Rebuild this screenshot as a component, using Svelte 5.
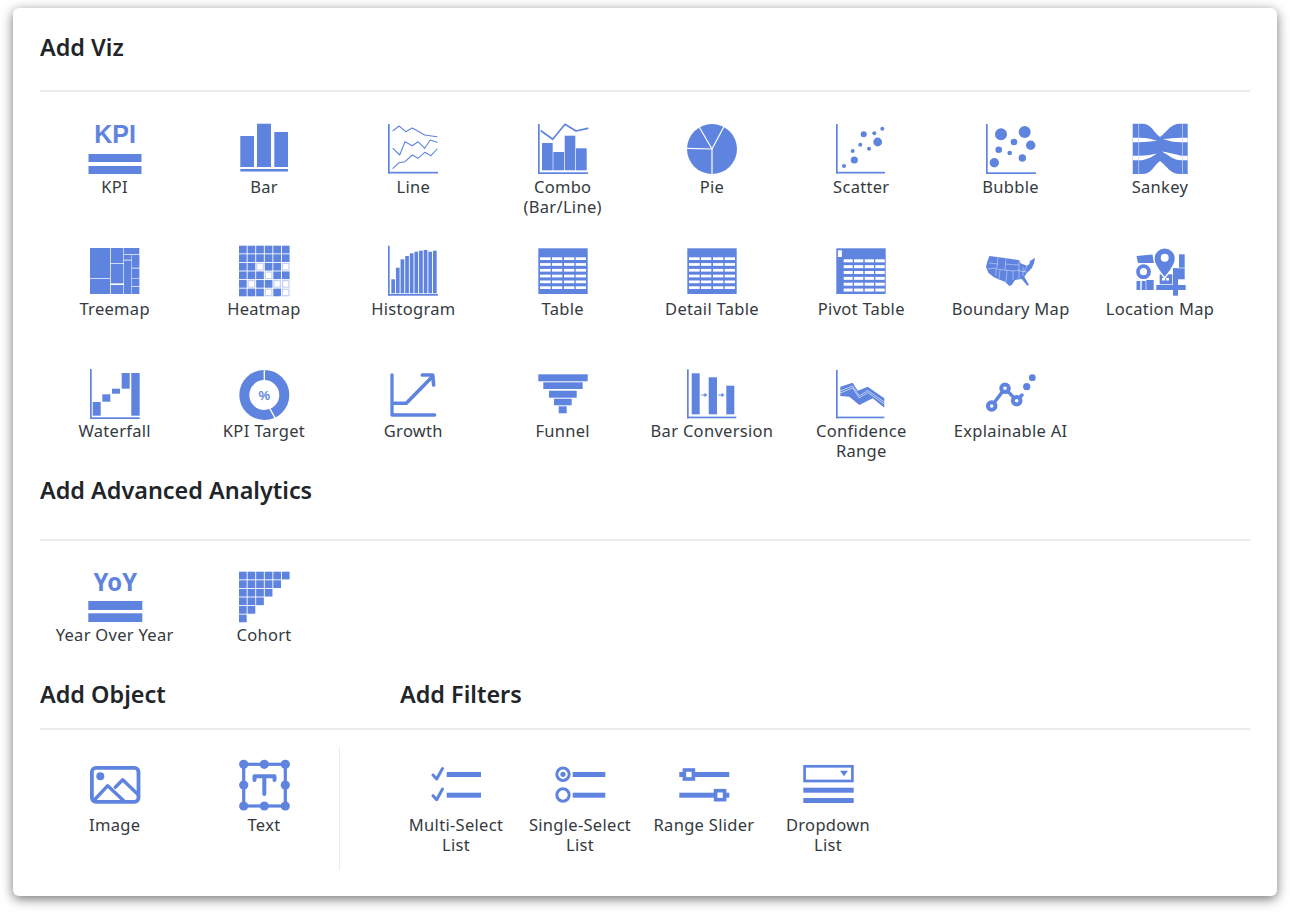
<script lang="ts">
  // helpers for the repeated icon parts (every icon is drawn on a 50x50 box)
  const r = (x, y, w, h) => `<rect x="${x}" y="${y}" width="${w}" height="${h}"/>`;
  const axis = (top, h, w) => r(0, top, 1.7, h) + r(0, top + h - 1.7, w, 1.7);
  const dots = (list) => list.map(([x, y, rad]) => `<circle cx="${x}" cy="${y}" r="${rad}"/>`).join('');
  const line = (pts, w = 1.1, color = 'currentColor') =>
    `<polyline points="${pts}" fill="none" stroke="${color}" stroke-width="${w}" stroke-linejoin="round" stroke-linecap="round"/>`;

  function table() {
    let s = r(0.3, 3.3, 49.4, 45.7);
    for (let i = 0; i < 6; i++)
      for (const [x, w] of [[2, 10.7], [14, 10.3], [26, 10.3], [37.7, 10.3]])
        s += `<rect x="${x}" y="${12.3 + 5.8 * i}" width="${w}" height="2.7" fill="#fff"/>`;
    return s;
  }

  function pivot() {
    let s = r(0.3, 3.3, 49.4, 45.7) + `<rect x="1.9" y="5.3" width="4" height="6.7" fill="#fff"/>`;
    for (let i = 0; i < 6; i++)
      for (const [x, w] of [[7.7, 9], [18, 9.3], [28.7, 9.3], [39.3, 9.4]])
        s += `<rect x="${x}" y="${14.3 + 5.85 * i}" width="${w}" height="3" fill="#fff"/>`;
    return s;
  }

  function heatmap() {
    const blank = ['2,2', '2,5', '3,3', '4,1', '4,4', '4,5', '5,3', '5,5'];
    let s = '';
    for (let row = 0; row < 6; row++)
      for (let col = 0; col < 6; col++) {
        const x = (col * 8.58).toFixed(2);
        const y = (0.7 + row * 8.58).toFixed(2);
        s += blank.includes(`${row},${col}`)
          ? `<rect x="${x}" y="${y}" width="7.7" height="7.7" fill="#c5d1f3"/><rect x="${+x + 1.2}" y="${+y + 1.2}" width="5.3" height="5.3" fill="#fff"/>`
          : r(x, y, 7.7, 7.7);
      }
    return s;
  }

  function cohort() {
    let s = '';
    for (let row = 0; row < 6; row++)
      for (let col = 0; col < 6 - row; col++)
        s += r((col * 8.58).toFixed(2), (0.7 + row * 8.58).toFixed(2), 7.7, 7.7);
    return s;
  }

  function histogram() {
    const tops = [34.3, 22.7, 14.3, 11, 8.3, 6.7, 5.7, 5, 6.7, 5.7];
    return axis(0.7, 50, 50) + tops.map((t, i) => r((3.3 + i * 4.63).toFixed(2), t, 3.7, 48.3 - t)).join('');
  }

  const wm = (x, y, rx = 1) => `<circle cx="${x}" cy="${y}" r="${rx}"/>`;

  const icons = {
    kpi: `<text x="25" y="19.5" text-anchor="middle" font-family="Liberation Sans" font-weight="700" font-size="25">KPI</text>` + r(-1.5, 31, 53, 8) + r(-1.5, 43, 53, 8),
    bar: r(1.3, 13, 13.7, 31) + r(18, 0.7, 14, 43.3) + r(35.3, 9, 13.7, 35) + r(1.3, 46, 47.7, 2.5),
    line: axis(1, 49.5, 50)
      + line('5,7.7 11,3 17.7,8.7 24.3,5 36.7,12 49,13.7')
      + line('5,25.3 11.7,32 17,18.7 24.3,22.7 30,18.7 36.7,25.3 42.3,17 49,19.3')
      + line('5,45.3 11,39.7 17,38.7 24.3,32 30,35.3 36.7,29.3 43,32.7 49,26'),
    combo: axis(1, 50, 50) + r(4, 20, 10.7, 27.3) + r(15.3, 29, 10.7, 18.3) + r(26.7, 12.7, 10.6, 34.6) + r(38, 25.3, 10.7, 22)
      + line('3.3,8 14.7,16.3 27,1.3 38,8 49.7,5.3', 1.7),
    pie: `<circle cx="25" cy="26" r="25"/>` + line('25,51 25,26 0,25.3', 1.2, '#fff') + line('12.5,4.5 25,26 37,3.5', 1.2, '#fff'),
    scatter: axis(1, 49.5, 49) + dots([[8, 43, 2], [18.3, 37, 3.6], [16.7, 28, 2], [24.3, 21.7, 2], [33, 25.7, 2], [27.7, 11.3, 3], [38.3, 10.3, 2], [41.7, 19, 4.4], [46.3, 5.7, 2]]),
    bubble: axis(1, 50, 50) + dots([[8.3, 39.7, 4.7], [12.7, 26.7, 3.3], [15, 11.3, 6], [23.7, 30, 2.3], [28, 19, 3.3], [36.3, 35, 3.7], [38.7, 9, 6], [44.7, 22.3, 4.7]]),
    sankey: `<path d="M-2.3 .7H7C17 .7 18 9 25 14C32 9 35 .7 45 .7H52.7V51H45C35 51 32 43 25 38C18 43 17 51 7 51H-2.3Z"/>`
      + `<path d="M-2.3 14.7H4C11 14.7 15 15.5 22 17.8C15 18.5 11 19.3 4 19.3H-2.3ZM-2.3 32.7H4C10 32.7 15 32 22 30.5C17 34 11 37.3 4 37.3H-2.3ZM52.7 14.7H46C39 14.7 34 15.5 28 16C34 18 39 19.3 46 19.3H52.7ZM52.7 32.7H46C39 31 35 30 27 28.5C33 32 39 37.3 46 37.3H52.7Z" fill="#fff"/>`
      + `<rect x="3.4" y=".7" width=".7" height="50.3" fill="#c9d5f5"/><rect x="47" y=".7" width=".7" height="50.3" fill="#c9d5f5"/>`,
    treemap: r(0, 3, 20, 30.3) + r(0, 34, 20, 15) + r(20.7, 3, 12.7, 15) + r(20.7, 18.7, 12.7, 19.7) + r(20.7, 40, 12.7, 9)
      + r(34, 3, 15.3, 6.3) + r(34, 10, 7.3, 4.7) + r(34, 15.5, 7.3, 33.5) + r(41.7, 10, 7.7, 12.7) + r(41.7, 23.5, 7.7, 10) + r(41.7, 34, 7.7, 7) + r(41.7, 41.7, 7.7, 7.3),
    heatmap: heatmap(),
    histogram: histogram(),
    table: table(),
    pivot: pivot(),
    usa: `<path d="M3.3 11 20.7 13.3 33.3 15.3 34.7 18.3 40.7 20.7 43.3 19.3 44 16 49 12.7 48 18.3 45.7 23.3 40.7 28.3 38.3 31.7 43 40 41.3 40.7 35.7 34 29 35 25.7 40 23.3 41 19 36.7 12.3 34.3 7.3 31.7 2.3 27.7 0 21.7 1.3 16.7Z"/>`
      + `<path d="M3 18 12 19M2 24 10 23 10 31M12 12 11 23M20 13 19 25 27 26 27 35M19 19 33 20M19 25 10 24M27 26 34 25M33 16 33 34M37 22 37 31M14 25 13 34M33 26 41 27M41 21 38 27M21 25 20 37" fill="none" stroke="#fff" stroke-width=".4"/>`,
    location: r(1.5, 36, 3.8, 9) + r(6.7, 36, 4, 9) + r(11.3, 35, 7.4, 10)
      + `<path d="M1.5 11 17.5 9.5 19 18 H3Z"/>` + r(44, 9.3, 5.7, 13.4) + r(38, 23.3, 11.7, 11) + r(38, 23.3, 5, 27.4) + r(21.3, 40, 29.4, 5)
      + r(24.7, 29.3, 12.6, 10) + `<rect x="27" y="33" width="3" height="2.5" fill="#fff"/><rect x="31" y="33" width="3" height="2.5" fill="#fff"/>`
      + `<circle cx="8.5" cy="26.7" r="5.5" fill="#fff" stroke="#fff" stroke-width="6"/><circle cx="8.5" cy="26.7" r="5.5" fill="#fff" stroke="currentColor" stroke-width="3.8"/>`
      + `<path d="M29.7 33C26 28 19 21 19 13.5A10.7 10.7 0 0 1 40.4 13.5C40.4 21 33.4 28 29.7 33Z" stroke="#fff" stroke-width="1.3"/><circle cx="29.7" cy="12.7" r="4" fill="#fff"/>`,
    waterfall: axis(2, 50, 49.7) + r(2.7, 35, 8, 13.7) + r(12.3, 27.3, 8, 7.4) + r(22, 21.7, 8, 5) + r(31.7, 6, 8, 15.7) + r(41.3, 6, 8.4, 42.7),
    target: `<circle cx="25.3" cy="28" r="20" fill="none" stroke="currentColor" stroke-width="10"/>`
      + line('25.3,2 25.3,14', 1.3, '#fff') + line('30,40 36,51', 1.5, '#fff')
      + `<text x="25.3" y="32.5" text-anchor="middle" font-family="Liberation Sans" font-weight="700" font-size="13">%</text>`,
    growth: line('4,8 4,48 46.7,48', 3.3) + line('6,36.3 18.3,36.3 44.3,9.7', 3.6) + line('34.3,8 44.7,8 45.7,18', 3.6),
    funnel: r(0.3, 7.3, 49.4, 7) + r(5.3, 15.3, 39.4, 6.7) + r(11, 23.7, 27.7, 7) + r(16, 31.7, 17.7, 6.6) + r(20.7, 39.3, 8, 7),
    conversion: axis(2.3, 49, 49.3) + r(4.7, 6.3, 8, 41) + r(21.7, 10.3, 8.3, 37) + r(39.3, 18.7, 8, 28.6)
      + r(14.3, 27.5, 4, 1) + `<path d="M17.5 25.8 20.3 28 17.5 30.2Z"/>` + r(31.3, 27.5, 4, 1) + `<path d="M34.5 25.8 37.3 28 34.5 30.2Z"/>`,
    confidence: axis(3, 48.3, 48.3) + `<path d="M4.3 19.7 16.7 15.7 21.7 23.7 31.7 19.7 48.3 31.3V40.7L36.7 31.3 23.3 38 13.3 29.7 4.3 29Z"/>`
      + line('4.3,24 16.7,19 23.3,29 31.7,23.5 48.3,35', 0.6, '#fff') + line('4.3,26 16.7,21 23.3,31 31.7,25.5 48.3,37', 0.6, '#fff'),
    explain: line('5.7,39 19,21.3 30.7,33.7 36,28', 3.4)
      + `<g fill="#fff" stroke="currentColor" stroke-width="4"><circle cx="5.7" cy="39" r="3.8"/><circle cx="19" cy="21.3" r="3.8"/><circle cx="30.7" cy="33.7" r="3.8"/></g>`
      + dots([[40.7, 19.7, 3.6], [46.3, 10.7, 3.4]]),
    yoy: `<text x="25.3" y="20" text-anchor="middle" font-family="Noto Sans" font-weight="700" font-size="25" textLength="43.5" lengthAdjust="spacingAndGlyphs">YoY</text>` + r(-1.7, 30, 54, 9) + r(-1.7, 42.3, 54, 8.7),
    cohort: cohort(),
    image: `<rect x="1.9" y="8.9" width="46.6" height="33.9" rx="4" fill="none" stroke="currentColor" stroke-width="3.8"/>` + wm(10.3, 17.3, 4)
      + line('5.3,40 17.7,26.7 33.7,41.7', 3.4) + line('25.3,28.3 32.7,20.7 48,35.5', 3.4),
    text: `<rect x="4.7" y="5.3" width="41.6" height="41.7" fill="none" stroke="currentColor" stroke-width="3.2"/>`
      + dots([[4.7, 5.3, 4.6], [25.3, 5.3, 4.6], [46.3, 5.3, 4.6], [4.7, 26, 4.6], [46.3, 26, 4.6], [4.7, 47, 4.6], [25.3, 47, 4.6], [46.3, 47, 4.6]])
      + `<path d="M15.5 21V17.3H35.5V21M25.3 17.3V35" fill="none" stroke="currentColor" stroke-width="4" stroke-linecap="round" stroke-linejoin="round"/>`,
    multi: r(15.7, 13, 34.3, 5) + r(15.7, 33.7, 34.3, 5) + line('2,16 5.7,20 11.5,9.5', 3) + line('2,36.7 5.7,40.7 11.5,30', 3),
    single: r(17.7, 13, 32.6, 5) + r(17.7, 33.7, 32.6, 5)
      + `<g fill="none" stroke="currentColor" stroke-width="3"><circle cx="8" cy="15.3" r="6.2"/><circle cx="8" cy="36" r="6.2"/></g>` + wm(8, 15.3, 2.6),
    range: r(0.3, 13, 50, 5) + r(0.3, 33.7, 50, 5)
      + `<g fill="#fff" stroke="currentColor" stroke-width="3.6"><rect x="5.4" y="11" width="9" height="9"/><rect x="36.6" y="31.7" width="9" height="9"/></g>`,
    dropdown: `<rect x="1.6" y="7.3" width="47.8" height="14.7" fill="none" stroke="currentColor" stroke-width="2.7"/><path d="M37 11.7H45L41 17.3Z"/>` + r(0.3, 28.7, 50.4, 5) + r(0.3, 39, 50.4, 5),
  };

  const viz = [
    ['kpi', 'KPI'], ['bar', 'Bar'], ['line', 'Line'], ['combo', 'Combo\n(Bar/Line)'], ['pie', 'Pie'], ['scatter', 'Scatter'], ['bubble', 'Bubble'], ['sankey', 'Sankey'],
    ['treemap', 'Treemap'], ['heatmap', 'Heatmap'], ['histogram', 'Histogram'], ['table', 'Table'], ['table', 'Detail Table'], ['pivot', 'Pivot Table'], ['usa', 'Boundary Map'], ['location', 'Location Map'],
    ['waterfall', 'Waterfall'], ['target', 'KPI Target'], ['growth', 'Growth'], ['funnel', 'Funnel'], ['conversion', 'Bar Conversion'], ['confidence', 'Confidence\nRange'], ['explain', 'Explainable AI'],
  ];
  const analytics = [['yoy', 'Year Over Year'], ['cohort', 'Cohort']];
  const objects = [['image', 'Image'], ['text', 'Text']];
  const filters = [['multi', 'Multi-Select\nList'], ['single', 'Single-Select\nList'], ['range', 'Range Slider'], ['dropdown', 'Dropdown\nList']];
</script>

{#snippet tile(icon, label)}
  <button class="tile">
    <svg class="icon" viewBox="0 0 50 50" fill="currentColor">{@html icons[icon]}</svg>
    <span class="label">{label}</span>
  </button>
{/snippet}

<div class="page">
  <div class="panel">
    <h2 class="first">Add Viz</h2>
    <hr class="rule-viz" />
    <div class="grid">
      {#each viz as [icon, label]}
        {@render tile(icon, label)}
      {/each}
    </div>

    <h2>Add Advanced Analytics</h2>
    <hr class="rule-adv" />
    <div class="grid">
      {#each analytics as [icon, label]}
        {@render tile(icon, label)}
      {/each}
    </div>

    <div class="head-row">
      <h2 class="object-head">Add Object</h2>
      <h2>Add Filters</h2>
    </div>
    <hr class="rule-low" />
    <div class="bottom">
      <div class="objects">
        {#each objects as [icon, label]}
          {@render tile(icon, label)}
        {/each}
      </div>
      <div class="filters">
        {#each filters as [icon, label]}
          {@render tile(icon, label)}
        {/each}
      </div>
    </div>
  </div>
</div>

<style>
  :global(body) { background: #fff; }

  .page { height: 915px; padding: 8px 0 0 13px; box-sizing: border-box; overflow: hidden; }

  .panel {
    box-sizing: border-box;
    width: 1264px; height: 888px;
    padding: 21px 27px 0;
    background: #fff;
    border-radius: 6px;
    box-shadow: 0 3px 12px rgba(0, 0, 0, 0.55);
    font-family: "Noto Sans", sans-serif;
  }

  h2 {
    margin: 11px 0 0;
    font-size: 23.4px; line-height: 36px; font-weight: 600;
    color: #212529;
  }
  h2.first { margin-top: 0; }

  hr { margin: 0; border: 0; height: 2px; background: #e9ecef; }
  .rule-viz { margin-top: 25px; margin-bottom: 31px; }
  .rule-adv { margin-top: 31px; margin-bottom: 30px; }
  .rule-low { margin-top: 16px; }

  .grid {
    display: grid;
    grid-template-columns: repeat(8, 149.33px);
    row-gap: 28px;
  }

  .tile {
    display: flex; flex-direction: column; align-items: center;
    min-height: 94px; padding: 0;
    border: 0; background: none;
    font: inherit; color: #5f84e0;
  }
  .icon { width: 50px; height: 50px; overflow: visible; flex-shrink: 0; }
  .label {
    margin-top: 4px;
    font-size: 16.5px; line-height: 20px; letter-spacing: 0.3px;
    color: #343a40;
    white-space: pre-line; text-align: center;
  }

  .head-row { display: flex; }
  .object-head { width: 360px; }

  .bottom { display: flex; padding-top: 17px; }
  .bottom .label { margin-top: 6px; }
  .objects {
    display: grid;
    grid-template-columns: repeat(2, 149.33px);
    width: 300px; height: 123px;
    box-sizing: border-box;
    padding-top: 12px;
    border-right: 1px solid #e9ecef;
  }
  .filters {
    display: grid;
    grid-template-columns: repeat(4, 124px);
    padding: 12px 0 0 54px;
  }
</style>
